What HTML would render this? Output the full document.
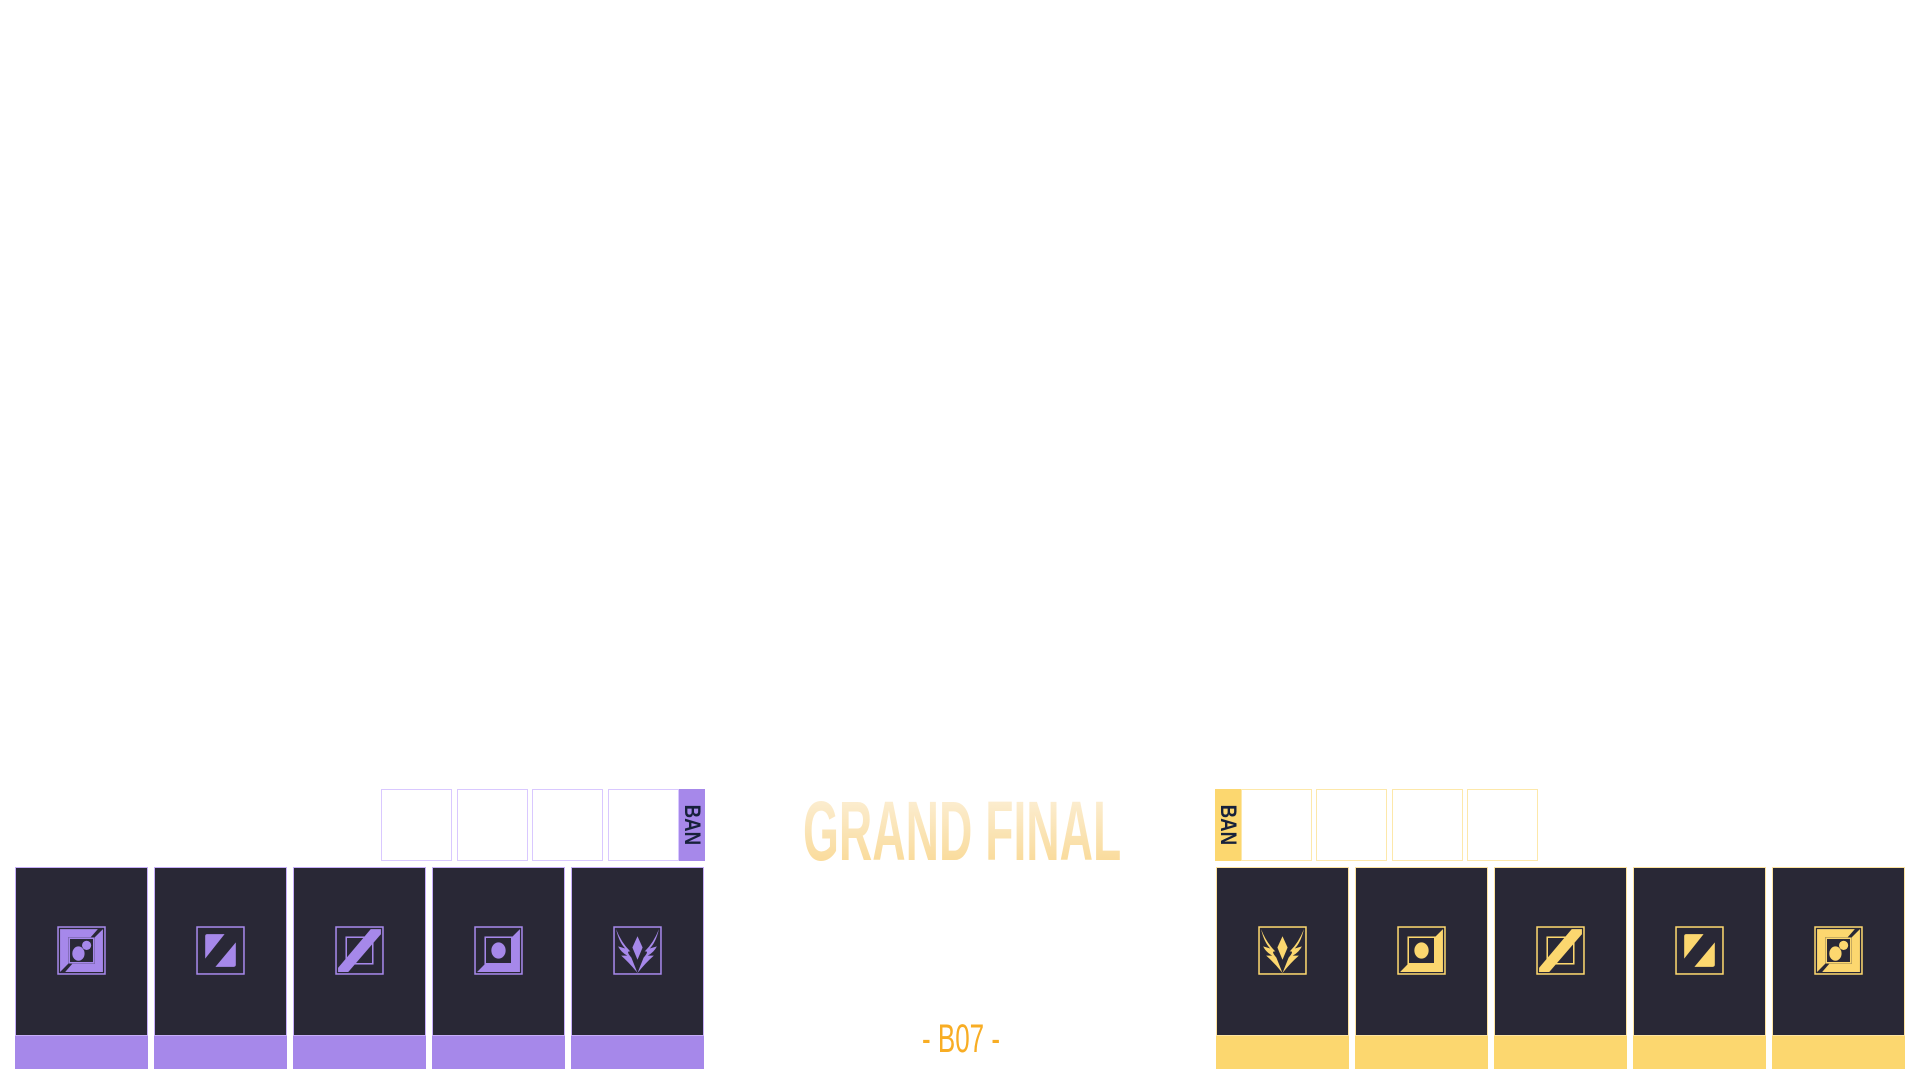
<!DOCTYPE html>
<html><head><meta charset="utf-8"><style>
html,body{margin:0;padding:0;width:1920px;height:1080px;background:#fff;overflow:hidden;position:relative;font-family:"Liberation Sans",sans-serif}
.ban{position:absolute;top:789px;height:70px;width:69px;background:#fff;border:1px solid #d9c8ff}
.ban.y{border-color:#fde8aa}
.tab{position:absolute;top:789px;height:72px;width:26px;background:#a688ea;display:flex;align-items:center;justify-content:center}
.tab.y{background:#fcd76f}
.tab span{writing-mode:vertical-rl;font-weight:bold;font-size:22px;color:#17213b;line-height:26px;transform:scaleY(0.85)}
.card{position:absolute;top:867px;width:131px;height:167px;background:#292836;border:1px solid #c6aef8}
.card.y{border-color:#fde3a0}
.strip{position:absolute;top:1036px;width:133px;height:33px;background:#a688ea}
.strip.y{background:#fcd76f}
.card svg{position:absolute;left:41px;top:58px;width:49px;height:49px}
.title{position:absolute;left:803px;top:786px;font-weight:bold;font-size:84px;line-height:90px;white-space:nowrap;transform-origin:left top;transform:scaleX(0.55);background:linear-gradient(#fcf1dc,#f9d78f);-webkit-background-clip:text;background-clip:text;color:transparent}
.bo{position:absolute;left:922px;top:1016px;font-size:40px;color:#f8ad24;white-space:nowrap;line-height:46px;transform-origin:left top;transform:scaleX(0.65)}
</style></head><body>
<svg width="0" height="0" style="position:absolute">
<defs>
<g id="i1"><rect x="1" y="1" width="46" height="46" fill="none" stroke="currentColor" stroke-width="1.5"/><polygon points="3,3 40,3 33,11 11,11 11,37 3,45" fill="currentColor"/><polygon points="45,3 45,45 8,45 15,37 37,37 37,11" fill="currentColor"/><rect x="12" y="12" width="24" height="24" fill="none" stroke="currentColor" stroke-width="1.5"/><ellipse cx="21" cy="27" rx="6" ry="7" fill="currentColor"/><circle cx="29" cy="19" r="4.5" fill="currentColor"/></g>
<g id="i2"><rect x="1" y="1" width="46" height="46" fill="none" stroke="currentColor" stroke-width="1.5"/><path d="M9 10 Q9 8 11 8 L28 8 L9 32 Z" fill="currentColor"/><path d="M39 16 L39 38 Q39 40 37 40 L19 40 Z" fill="currentColor"/></g>
<g id="i3"><rect x="1" y="1" width="46" height="46" fill="none" stroke="currentColor" stroke-width="1.5"/><rect x="11" y="11" width="26" height="26" fill="none" stroke="currentColor" stroke-width="1.5"/><polygon points="35,3 45,3 45,8 13,45 3,45 3,41" fill="currentColor"/></g>
<g id="i4"><rect x="1" y="1" width="46" height="46" fill="none" stroke="currentColor" stroke-width="1.5"/><polygon points="45,3 45,45 3,45 11,37 37,37 37,11" fill="currentColor"/><rect x="11" y="11" width="26" height="26" fill="none" stroke="currentColor" stroke-width="1.5"/><ellipse cx="24" cy="24" rx="7" ry="8" fill="currentColor"/></g>
<g id="i5"><rect x="1" y="1" width="46" height="46" fill="none" stroke="currentColor" stroke-width="1.5"/><path d="M24 10 L29 21 L24 33 L19 21 Z" fill="currentColor"/><path d="M3 3 Q6 16 12 22 L5 20 Q8 26 14 29 L8 29 Q16 36 24 46 Q20 36 18 31 Q12 24 17 25 Q8 16 3 3Z" fill="currentColor"/><path d="M45 3 Q42 16 36 22 L43 20 Q40 26 34 29 L40 29 Q32 36 24 46 Q28 36 30 31 Q36 24 31 25 Q40 16 45 3Z" fill="currentColor"/></g>
</defs></svg>

<div class="ban" style="left:381px"></div>
<div class="ban" style="left:457px"></div>
<div class="ban" style="left:532px"></div>
<div class="ban" style="left:608px"></div>
<div class="tab" style="left:679px"><span>BAN</span></div>

<div class="tab y" style="left:1215px"><span>BAN</span></div>
<div class="ban y" style="left:1241px"></div>
<div class="ban y" style="left:1316px"></div>
<div class="ban y" style="left:1392px"></div>
<div class="ban y" style="left:1467px"></div>

<div class="card" style="left:15px;color:#a688ea"><svg viewBox="0 0 48 48"><use href="#i1"/></svg></div>
<div class="card" style="left:154px;color:#a688ea"><svg viewBox="0 0 48 48"><use href="#i2"/></svg></div>
<div class="card" style="left:293px;color:#a688ea"><svg viewBox="0 0 48 48"><use href="#i3"/></svg></div>
<div class="card" style="left:432px;color:#a688ea"><svg viewBox="0 0 48 48"><use href="#i4"/></svg></div>
<div class="card" style="left:571px;color:#a688ea"><svg viewBox="0 0 48 48"><use href="#i5"/></svg></div>
<div class="strip" style="left:15px"></div><div class="strip" style="left:154px"></div><div class="strip" style="left:293px"></div><div class="strip" style="left:432px"></div><div class="strip" style="left:571px"></div>

<div class="card y" style="left:1216px;color:#fcd76f"><svg viewBox="0 0 48 48"><use href="#i5"/></svg></div>
<div class="card y" style="left:1355px;color:#fcd76f"><svg viewBox="0 0 48 48"><use href="#i4"/></svg></div>
<div class="card y" style="left:1494px;color:#fcd76f"><svg viewBox="0 0 48 48"><use href="#i3"/></svg></div>
<div class="card y" style="left:1633px;color:#fcd76f"><svg viewBox="0 0 48 48"><use href="#i2"/></svg></div>
<div class="card y" style="left:1772px;color:#fcd76f"><svg viewBox="0 0 48 48"><use href="#i1"/></svg></div>
<div class="strip y" style="left:1216px"></div><div class="strip y" style="left:1355px"></div><div class="strip y" style="left:1494px"></div><div class="strip y" style="left:1633px"></div><div class="strip y" style="left:1772px"></div>

<div class="title">GRAND FINAL</div>
<div class="bo">- B07 -</div>
</body></html>
